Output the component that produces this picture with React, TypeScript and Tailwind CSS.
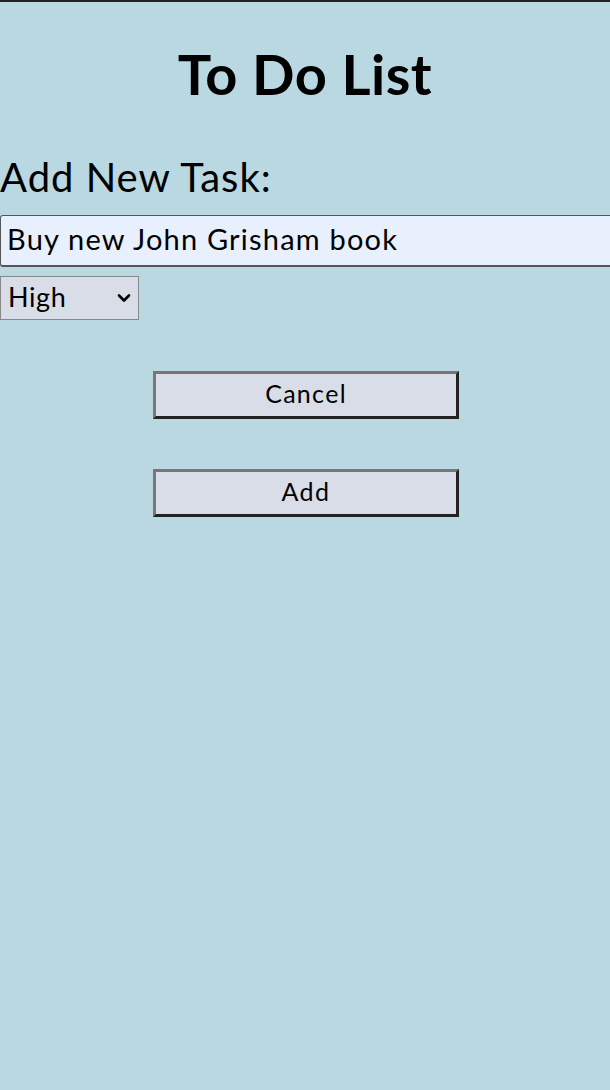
import { useState } from 'react'

export default function App() {
  const [task, setTask] = useState('Buy new John Grisham book')
  const [priority, setPriority] = useState('High')

  return (
    <div className="min-h-[1090px] border-t-2 border-[#222] bg-[#bad8e1] text-black font-['Lato',sans-serif]">
      {/* Title */}
      <h1 className="pt-[37px] text-center text-[56px] font-bold leading-[70px] tracking-[0.5px]">To Do List</h1>

      {/* Form */}
      <div className="mt-[42px]">
        <label className="block text-[40px] leading-[52px] tracking-[1px]">Add New Task:</label>
        <input
          value={task}
          onChange={(e) => setTask(e.target.value)}
          className="mt-[12px] block h-[52px] w-[620px] rounded-l-[3px] border border-b-2 border-[#555] bg-[#e8f0fe] px-[6px] pb-[4px] text-[29px] tracking-[1.2px] outline-none"
        />
        <div className="relative mt-[9px] w-[139px]">
          <select
            value={priority}
            onChange={(e) => setPriority(e.target.value)}
            className="block h-[44px] w-[139px] appearance-none border border-[#888] bg-[#d9dde7] pl-[7px] pb-[2px] text-[27px] tracking-[0.6px] outline-none"
          >
            <option>High</option>
            <option>Medium</option>
            <option>Low</option>
          </select>
          <svg
            viewBox="0 0 14 10"
            className="pointer-events-none absolute right-[8px] top-[17px] h-[10px] w-[14px]"
            fill="none"
            stroke="black"
            strokeWidth="2.6"
            strokeLinecap="round"
            strokeLinejoin="round"
          >
            <path d="M2 2.5 L7 7.5 L12 2.5" />
          </svg>
        </div>
      </div>

      {/* Buttons */}
      <div className="mt-[51px] flex flex-col items-center gap-[50px] pl-[2px]">
        <button className="h-[48px] w-[306px] border-[3px] border-t-[#777] border-l-[#777] border-r-[#222] border-b-[#222] bg-[#d9dde7] pb-[2px] text-[25px] tracking-[1.3px]">
          Cancel
        </button>
        <button className="h-[48px] w-[306px] border-[3px] border-t-[#777] border-l-[#777] border-r-[#222] border-b-[#222] bg-[#d9dde7] pb-[2px] text-[25px] tracking-[1.5px]">
          Add
        </button>
      </div>
    </div>
  )
}
